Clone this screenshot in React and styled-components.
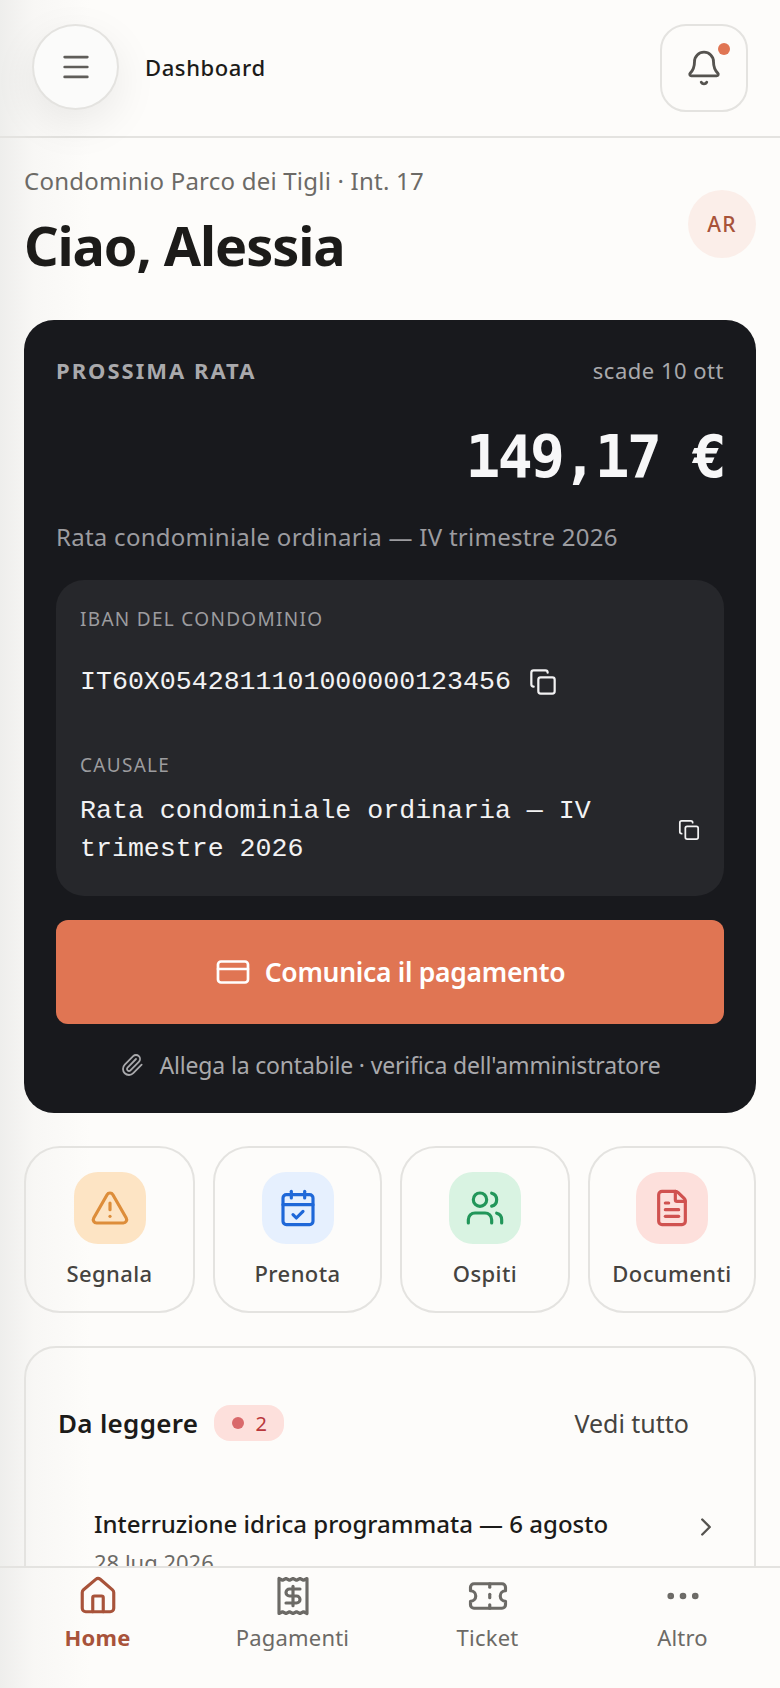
import React from 'react';
import styled, { createGlobalStyle } from 'styled-components';
import {
  Menu, Bell, Copy, CreditCard, Paperclip, TriangleAlert, CalendarCheck,
  Users, FileText, ChevronRight, House, Receipt, Ticket, Ellipsis,
} from 'lucide-react';

const SANS = '"Noto Sans", "Liberation Sans", sans-serif';
const MONO = '"Liberation Mono", "DejaVu Sans Mono", monospace';

const Global = createGlobalStyle`
  html, body { margin: 0; padding: 0; height: 100%; overflow: hidden; }
  body { font-family: ${SANS}; color: #1c1b19; background: #fdfcfa; }
  * { box-sizing: border-box; }
`;

const Screen = styled.div`
  position: relative;
  width: 780px;
  height: 1688px;
  overflow: hidden;
  background: linear-gradient(to right, #eeeeec 0, #f8f7f5 34px, #fdfcfa 90px);
`;

const Header = styled.header`
  height: 138px;
  padding: 24px 32px 0 32px;
  display: flex;
  align-items: flex-start;
  border-bottom: 2px solid #e4e3e0;
`;

const MenuButton = styled.div`
  width: 87px;
  height: 86px;
  border-radius: 50%;
  border: 2px solid #e4e3e0;
  background: #fbfbfa;
  box-shadow: 0 14px 44px rgba(0, 0, 0, 0.08);
  display: flex;
  align-items: center;
  justify-content: center;
  color: #5f5d59;
`;

const HeaderTitle = styled.div`
  margin-left: 26px;
  height: 86px;
  line-height: 86px;
  font-size: 22px;
  font-weight: 500;
  letter-spacing: 0.6px;
  flex: 1;
`;

const BellButton = styled.div`
  position: relative;
  width: 88px;
  height: 88px;
  border-radius: 26px;
  border: 2px solid #e4e3e0;
  display: flex;
  align-items: center;
  justify-content: center;
  color: #55534f;
`;

const BellDot = styled.span`
  position: absolute;
  top: 17px;
  right: 16px;
  width: 12px;
  height: 12px;
  border-radius: 50%;
  background: #e07553;
`;

const Main = styled.main`
  padding: 0 24px;
`;

const Greeting = styled.section`
  display: flex;
  justify-content: space-between;
  align-items: flex-start;
  height: 182px;
  padding-top: 26px;
`;

const Sub = styled.div`
  font-size: 24px;
  line-height: 34px;
  letter-spacing: 0.22px;
  color: #6c6a66;
`;

const Hello = styled.h1`
  margin: 12px 0 0;
  font-size: 54px;
  line-height: 70px;
  font-weight: 700;
  letter-spacing: -1.1px;
`;

const Avatar = styled.div`
  width: 68px;
  height: 68px;
  margin-top: 26px;
  border-radius: 50%;
  background: #fbeee9;
  color: #a8533a;
  font-size: 21px;
  font-weight: 500;
  letter-spacing: 1.2px;
  display: flex;
  align-items: center;
  justify-content: center;
`;

const RateCard = styled.section`
  height: 793px;
  border-radius: 30px;
  background: #18191d;
  padding: 32px 32px 0;
`;

const RateTop = styled.div`
  display: flex;
  justify-content: space-between;
  align-items: center;
  height: 36px;
`;

const RateLabel = styled.span`
  font-size: 22px;
  font-weight: 700;
  letter-spacing: 2px;
  color: #a9a9ac;
`;

const RateDue = styled.span`
  font-size: 22px;
  letter-spacing: 0.5px;
  color: #a9a9ac;
`;

const Amount = styled.div`
  margin-top: 34px;
  text-align: right;
  font-family: "DejaVu Sans Mono", monospace;
  font-size: 58px;
  line-height: 70px;
  font-weight: 700;
  letter-spacing: -2.6px;
  color: #f7f7f8;
`;

const RateDesc = styled.div`
  margin-top: 28px;
  font-size: 24px;
  line-height: 34px;
  letter-spacing: 0.27px;
  color: #9c9ca0;
`;

const BankBox = styled.div`
  margin-top: 26px;
  height: 316px;
  border-radius: 28px;
  background: #26272b;
  padding: 24px 24px 0;
`;

const BankLabel = styled.div`
  font-size: 19px;
  line-height: 30px;
  letter-spacing: 1.3px;
  color: #9c9c9f;
  margin-top: ${(p) => p.$gap || 0}px;
`;

const BankRow = styled.div`
  display: flex;
  align-items: center;
  gap: 18px;
  margin-top: ${(p) => p.$gap || 0}px;
  justify-content: ${(p) => (p.$spread ? 'space-between' : 'flex-start')};
  color: #f2f2f3;
`;

const BankValue = styled.div`
  font-family: ${MONO};
  font-size: 26.6px;
  line-height: 38px;
  max-width: 520px;
`;

const PayButton = styled.div`
  margin-top: 24px;
  height: 104px;
  border-radius: 12px;
  background: #e07553;
  color: #fff;
  font-size: 26.5px;
  font-weight: 600;
  letter-spacing: -0.3px;
  display: flex;
  align-items: center;
  justify-content: center;
  gap: 14px;
`;

const Attach = styled.div`
  margin-top: 24px;
  display: flex;
  align-items: center;
  justify-content: center;
  gap: 16px;
  font-size: 23px;
  line-height: 34px;
  letter-spacing: -0.17px;
  color: #a9a9ac;
`;

const Tiles = styled.div`
  margin-top: 33px;
  display: grid;
  grid-template-columns: 171px 169px 170px 168px;
  gap: 18px;
`;

const Tile = styled.div`
  height: 167px;
  border-radius: 36px;
  border: 2px solid #e4e3e0;
  padding-top: 24px;
  display: flex;
  flex-direction: column;
  align-items: center;
`;

const TileIcon = styled.div`
  width: 72px;
  height: 72px;
  border-radius: 24px;
  background: ${(p) => p.$bg};
  color: ${(p) => p.$fg};
  display: flex;
  align-items: center;
  justify-content: center;
`;

const TileLabel = styled.div`
  margin-top: 13px;
  font-size: 22px;
  line-height: 32px;
  font-weight: 500;
  letter-spacing: 0.4px;
  color: #45433f;
`;

const Panel = styled.section`
  margin-top: 33px;
  height: 400px;
  border: 2px solid #e4e3e0;
  border-radius: 32px;
  padding: 56px 33px 0 32px;
`;

const PanelHead = styled.div`
  display: flex;
  align-items: center;
  height: 38px;
`;

const PanelTitle = styled.div`
  font-size: 26px;
  font-weight: 600;
  letter-spacing: 0.3px;
`;

const CountBadge = styled.div`
  margin-left: 16px;
  width: 70px;
  height: 36px;
  border-radius: 16px;
  background: #fde0dc;
  color: #b9373c;
  font-size: 20px;
  display: flex;
  align-items: center;
  justify-content: center;
  gap: 12px;
`;

const CountDot = styled.span`
  width: 12px;
  height: 12px;
  border-radius: 50%;
  background: #d9696b;
`;

const SeeAll = styled.div`
  margin-left: auto;
  margin-right: 32px;
  font-size: 25px;
  color: #45433f;
`;

const NoticeRow = styled.div`
  margin-top: 64px;
  padding-left: 36px;
  display: flex;
  align-items: flex-start;
  justify-content: space-between;
`;

const NoticeTitle = styled.div`
  font-size: 24px;
  line-height: 36px;
  font-weight: 500;
`;

const NoticeDate = styled.div`
  margin-top: 3px;
  font-size: 22px;
  line-height: 34px;
  color: #6c6a66;
`;

const Chevron = styled.div`
  margin-top: 6px;
  color: #55534f;
`;

const BottomNav = styled.nav`
  position: absolute;
  left: 0;
  right: 0;
  bottom: 0;
  height: 122px;
  border-top: 2px solid #e4e3e0;
  background: linear-gradient(to right, #eeeeec 0, #f8f7f5 34px, #fdfcfa 90px);
  display: grid;
  grid-template-columns: repeat(4, 195px);
`;

const NavItem = styled.div`
  display: flex;
  flex-direction: column;
  align-items: center;
  padding-top: 7px;
  color: ${(p) => (p.$active ? '#a8533a' : '#6c6a66')};
  font-size: 22px;
  line-height: 32px;
  font-weight: ${(p) => (p.$active ? 700 : 400)};
  letter-spacing: 0.2px;
`;

const NavLabel = styled.span`
  margin-top: 4px;
`;

const tiles = [
  { label: 'Segnala', Icon: TriangleAlert, bg: '#fde4c4', fg: '#dd8d3a' },
  { label: 'Prenota', Icon: CalendarCheck, bg: '#e6f0fe', fg: '#1f68d8' },
  { label: 'Ospiti', Icon: Users, bg: '#d9f3e2', fg: '#22965a' },
  { label: 'Documenti', Icon: FileText, bg: '#fde0dc', fg: '#d05250' },
];

const navItems = [
  { label: 'Home', Icon: House, active: true },
  { label: 'Pagamenti', Icon: Receipt },
  { label: 'Ticket', Icon: Ticket },
  { label: 'Altro', Icon: Ellipsis },
];

export default function App() {
  return (
    <Screen>
      <Global />
      <Header>
        <MenuButton><Menu size={34} strokeWidth={1.9} /></MenuButton>
        <HeaderTitle>Dashboard</HeaderTitle>
        <BellButton>
          <Bell size={38} strokeWidth={1.8} />
          <BellDot />
        </BellButton>
      </Header>
      <Main>
        <Greeting>
          <div>
            <Sub>Condominio Parco dei Tigli · Int. 17</Sub>
            <Hello>Ciao, Alessia</Hello>
          </div>
          <Avatar>AR</Avatar>
        </Greeting>
        <RateCard>
          <RateTop>
            <RateLabel>PROSSIMA RATA</RateLabel>
            <RateDue>scade 10 ott</RateDue>
          </RateTop>
          <Amount>149,17 €</Amount>
          <RateDesc>Rata condominiale ordinaria — IV trimestre 2026</RateDesc>
          <BankBox>
            <BankLabel>IBAN DEL CONDOMINIO</BankLabel>
            <BankRow $gap={29}>
              <BankValue>IT60X0542811101000000123456</BankValue>
              <Copy size={28} strokeWidth={1.9} />
            </BankRow>
            <BankLabel $gap={49}>CAUSALE</BankLabel>
            <BankRow $gap={12} $spread>
              <BankValue>Rata condominiale ordinaria — IV trimestre 2026</BankValue>
              <Copy size={22} strokeWidth={1.9} />
            </BankRow>
          </BankBox>
          <PayButton>
            <CreditCard size={36} strokeWidth={1.8} />
            Comunica il pagamento
          </PayButton>
          <Attach>
            <Paperclip size={24} strokeWidth={1.8} />
            Allega la contabile · verifica dell'amministratore
          </Attach>
        </RateCard>
        <Tiles>
          {tiles.map(({ label, Icon, bg, fg }) => (
            <Tile key={label}>
              <TileIcon $bg={bg} $fg={fg}><Icon size={40} strokeWidth={1.9} /></TileIcon>
              <TileLabel>{label}</TileLabel>
            </Tile>
          ))}
        </Tiles>
        <Panel>
          <PanelHead>
            <PanelTitle>Da leggere</PanelTitle>
            <CountBadge><CountDot />2</CountBadge>
            <SeeAll>Vedi tutto</SeeAll>
          </PanelHead>
          <NoticeRow>
            <div>
              <NoticeTitle>Interruzione idrica programmata — 6 agosto</NoticeTitle>
              <NoticeDate>28 lug 2026</NoticeDate>
            </div>
            <Chevron><ChevronRight size={30} strokeWidth={1.9} /></Chevron>
          </NoticeRow>
        </Panel>
      </Main>
      <BottomNav>
        {navItems.map(({ label, Icon, active }) => (
          <NavItem key={label} $active={active}>
            <Icon size={42} strokeWidth={1.8} />
            <NavLabel>{label}</NavLabel>
          </NavItem>
        ))}
      </BottomNav>
    </Screen>
  );
}
